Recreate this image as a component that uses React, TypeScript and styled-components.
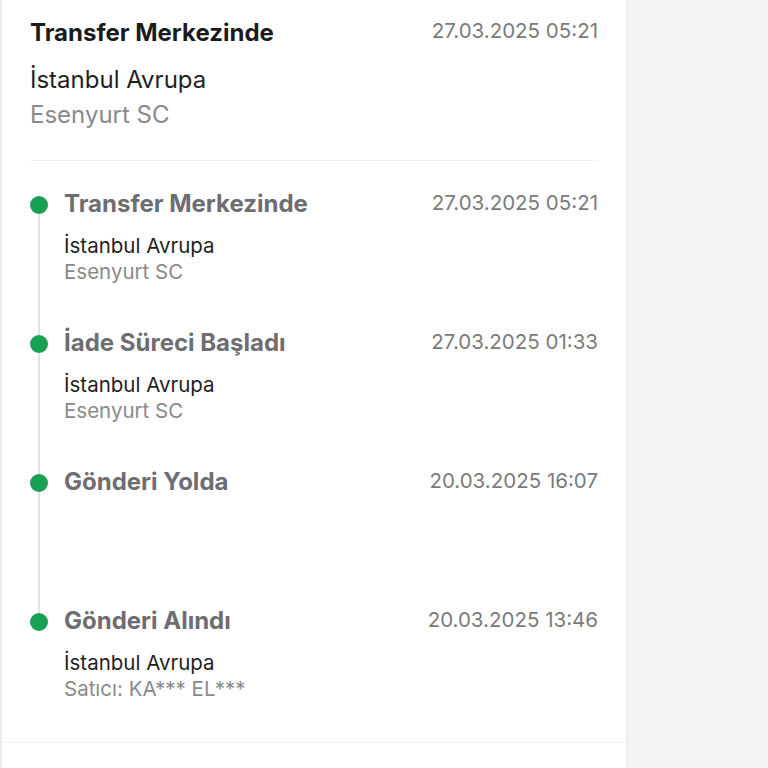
import React from "react";
import styled, { createGlobalStyle } from "styled-components";

const GlobalStyle = createGlobalStyle`
  html, body {
    margin: 0;
    padding: 0;
    background: #f3f4f6;
    font-family: Inter, "Noto Sans", "Liberation Sans", sans-serif;
    -webkit-font-smoothing: antialiased;
  }
`;

const Page = styled.div`
  display: flex;
  min-height: 768px;
`;

const Card = styled.div`
  width: 624px;
  background: #ffffff;
  border-left: 2px solid #ececec;
  box-shadow: 1px 0 3px rgba(0, 0, 0, 0.05);
  display: flex;
  flex-direction: column;
`;

const Header = styled.div`
  margin: 0 28px;
  padding: 20px 0 30px;
  border-bottom: 1px solid #f2f2f2;
`;

const HeadRow = styled.div`
  display: flex;
  justify-content: space-between;
  align-items: flex-start;
`;

const HeadTitle = styled.div`
  font-size: 24px;
  line-height: 26px;
  font-weight: 700;
  color: #1b1b1b;
`;

const DateText = styled.div<{ $offset?: number }>`
  font-size: 20.5px;
  line-height: 22px;
  color: #7b7b7b;
  margin-top: ${(p) => p.$offset ?? 0}px;
  white-space: nowrap;
`;

const HeadCity = styled.div`
  font-size: 24px;
  line-height: 30px;
  color: #1f1f1f;
  margin-top: 19px;
`;

const HeadBranch = styled.div`
  font-size: 24px;
  line-height: 30px;
  color: #8a8a8a;
  margin-top: 5px;
`;

const Timeline = styled.div`
  padding: 30px 28px 0;
  border-bottom: 1px solid #f2f2f2;
`;

const Item = styled.div<{ $last?: boolean }>`
  display: flex;
  gap: 16px;
  min-height: ${(p) => (p.$last ? "auto" : "139px")};
  padding-bottom: ${(p) => (p.$last ? "40px" : "0")};
`;

const Rail = styled.div`
  width: 18px;
  display: flex;
  flex-direction: column;
  align-items: center;
  flex-shrink: 0;
`;

const Connector = styled.div<{ $hidden?: boolean; $grow?: boolean }>`
  width: 1.5px;
  background: ${(p) => (p.$hidden ? "transparent" : "#e2e2e2")};
  height: ${(p) => (p.$grow ? "auto" : "5px")};
  flex: ${(p) => (p.$grow ? "1" : "none")};
`;

const Dot = styled.div`
  width: 18px;
  height: 18px;
  border-radius: 50%;
  background: #18a053;
  flex-shrink: 0;
`;

const Body = styled.div`
  flex: 1;
  display: flex;
  flex-direction: column;
`;

const ItemRow = styled.div`
  display: flex;
  justify-content: space-between;
  align-items: flex-start;
`;

const ItemTitle = styled.div`
  font-size: 24px;
  line-height: 26px;
  font-weight: 700;
  color: #6d6d72;
`;

const Lines = styled.div`
  margin-top: 16px;
  display: flex;
  flex-direction: column;
`;

const City = styled.div`
  font-size: 20.5px;
  line-height: 26px;
  color: #1f1f1f;
`;

const Sub = styled.div`
  font-size: 20.5px;
  line-height: 26px;
  color: #8a8a8a;
`;

type Event = {
  title: string;
  date: string;
  city?: string;
  sub?: string;
};

const events: Event[] = [
  { title: "Transfer Merkezinde", date: "27.03.2025 05:21", city: "İstanbul Avrupa", sub: "Esenyurt SC" },
  { title: "İade Süreci Başladı", date: "27.03.2025 01:33", city: "İstanbul Avrupa", sub: "Esenyurt SC" },
  { title: "Gönderi Yolda", date: "20.03.2025 16:07" },
  { title: "Gönderi Alındı", date: "20.03.2025 13:46", city: "İstanbul Avrupa", sub: "Satıcı: KA*** EL***" },
];

export default function App() {
  return (
    <>
      <GlobalStyle />
      <Page>
        <Card>
          <Header>
            <HeadRow>
              <HeadTitle>Transfer Merkezinde</HeadTitle>
              <DateText $offset={0}>27.03.2025 05:21</DateText>
            </HeadRow>
            <HeadCity>İstanbul Avrupa</HeadCity>
            <HeadBranch>Esenyurt SC</HeadBranch>
          </Header>
          <Timeline>
            {events.map((e, i) => {
              const first = i === 0;
              const last = i === events.length - 1;
              return (
                <Item key={i} $last={last}>
                  <Rail>
                    <Connector $hidden={first} />
                    <Dot />
                    <Connector $hidden={last} $grow />
                  </Rail>
                  <Body>
                    <ItemRow>
                      <ItemTitle>{e.title}</ItemTitle>
                      <DateText $offset={1}>{e.date}</DateText>
                    </ItemRow>
                    {e.city && (
                      <Lines>
                        <City>{e.city}</City>
                        <Sub>{e.sub}</Sub>
                      </Lines>
                    )}
                  </Body>
                </Item>
              );
            })}
          </Timeline>
        </Card>
      </Page>
    </>
  );
}
